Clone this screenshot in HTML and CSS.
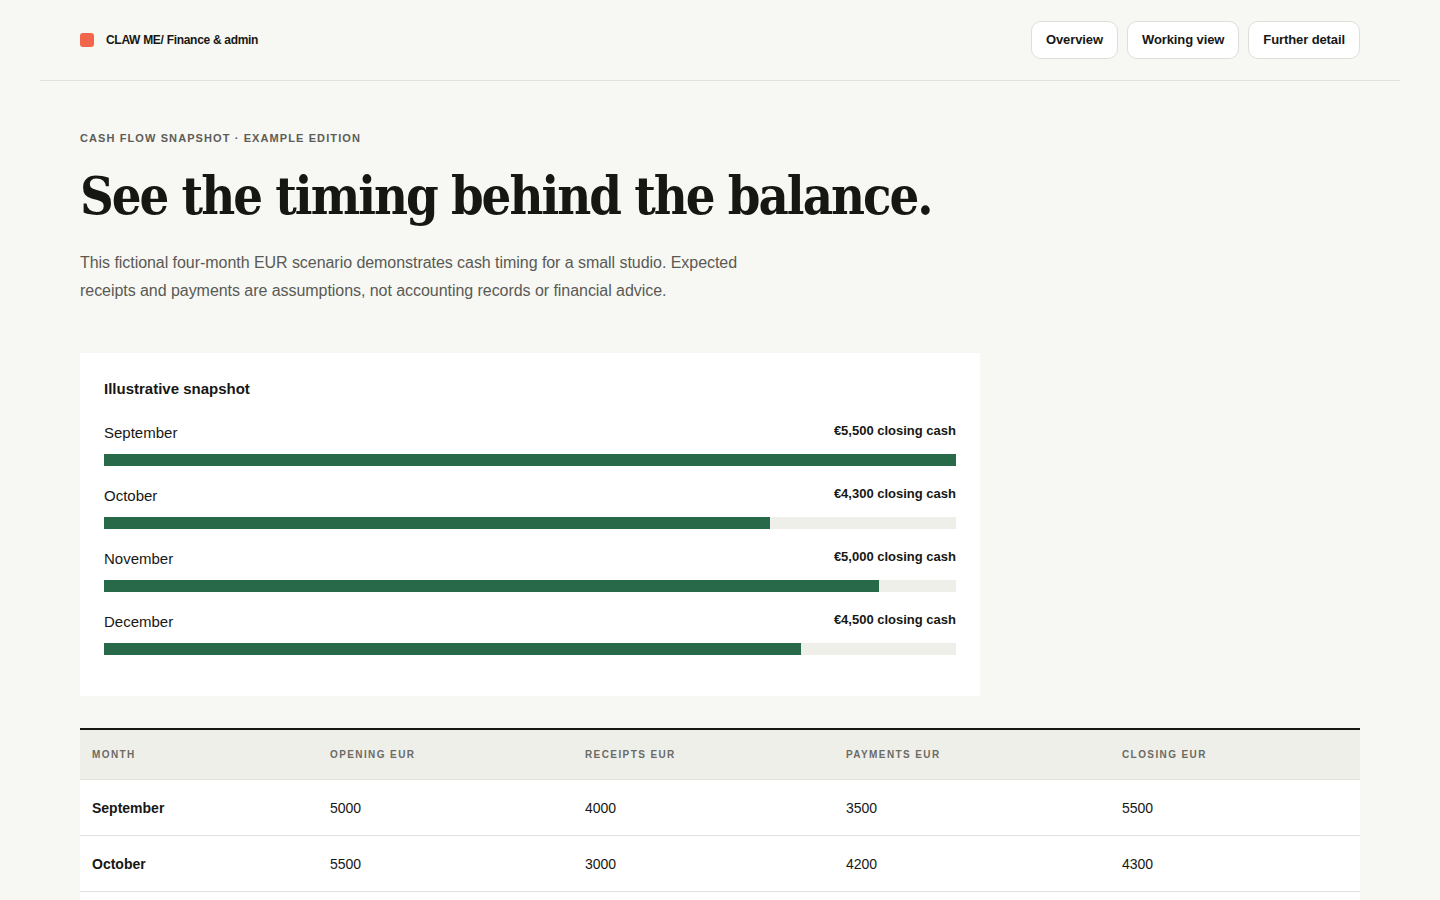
FILE: index.html
```html
<!doctype html>
<html>
<head>
<meta charset="utf-8">
<title>Cash flow snapshot</title>
<link rel="stylesheet" href="styles.css">
</head>
<body>
<div class="page">
	<header class="topbar">
		<div class="brand"><span class="brand-mark"></span>CLAW ME/ Finance &amp; admin</div>
		<nav class="nav">
			<a href="#" class="nav-btn">Overview</a>
			<a href="#" class="nav-btn">Working view</a>
			<a href="#" class="nav-btn">Further detail</a>
		</nav>
	</header>

	<main class="content">
		<p class="eyebrow">Cash flow snapshot · Example edition</p>
		<h1 class="title">See the timing behind the balance.</h1>
		<p class="lead">This fictional four-month EUR scenario demonstrates cash timing for a small studio. Expected receipts and payments are assumptions, not accounting records or financial advice.</p>

		<section class="card">
			<h2 class="card-title">Illustrative snapshot</h2>
			<div class="bars">
				<div class="bar-row">
					<div class="bar-head"><span class="bar-label">September</span><span class="bar-value">€5,500 closing cash</span></div>
					<div class="track"><div class="fill" style="width:100%"></div></div>
				</div>
				<div class="bar-row">
					<div class="bar-head"><span class="bar-label">October</span><span class="bar-value">€4,300 closing cash</span></div>
					<div class="track"><div class="fill" style="width:78.18%"></div></div>
				</div>
				<div class="bar-row">
					<div class="bar-head"><span class="bar-label">November</span><span class="bar-value">€5,000 closing cash</span></div>
					<div class="track"><div class="fill" style="width:90.91%"></div></div>
				</div>
				<div class="bar-row">
					<div class="bar-head"><span class="bar-label">December</span><span class="bar-value">€4,500 closing cash</span></div>
					<div class="track"><div class="fill" style="width:81.82%"></div></div>
				</div>
			</div>
		</section>

		<table class="ledger">
			<thead>
				<tr><th class="c1">Month</th><th class="c2">Opening EUR</th><th class="c3">Receipts EUR</th><th class="c4">Payments EUR</th><th>Closing EUR</th></tr>
			</thead>
			<tbody>
				<tr><td class="month">September</td><td>5000</td><td>4000</td><td>3500</td><td>5500</td></tr>
				<tr><td class="month">October</td><td>5500</td><td>3000</td><td>4200</td><td>4300</td></tr>
				<tr><td class="month">November</td><td>4300</td><td>4500</td><td>3800</td><td>5000</td></tr>
				<tr><td class="month">December</td><td>5000</td><td>3200</td><td>3700</td><td>4500</td></tr>
			</tbody>
		</table>
	</main>
</div>
</body>
</html>
```

FILE: styles.css
```css
body{
	margin:0;
	background:#f7f7f3;
	color:#171714;
	font-family:"Liberation Sans", Arial, sans-serif;
}
.page{
	width:1360px;
	margin:0 auto;
}
.topbar{
	height:80px;
	padding:0 40px;
	display:flex;
	align-items:center;
	justify-content:space-between;
	border-bottom:1px solid #e2e1dc;
}
.brand{
	display:flex;
	align-items:center;
	gap:12px;
	font-size:12px;
	font-weight:700;
	letter-spacing:-0.3px;
}
.brand-mark{
	width:14px;
	height:14px;
	border-radius:3px;
	background:#f2674b;
}
.nav{
	display:flex;
	gap:9px;
}
.nav-btn{
	display:inline-block;
	height:38px;
	line-height:36px;
	box-sizing:border-box;
	padding:0 14px;
	border:1px solid #dfded8;
	border-radius:10px;
	background:#fff;
	color:#171714;
	font-size:13px;
	font-weight:700;
	text-decoration:none;
	letter-spacing:-0.1px;
}
.content{
	padding:0 40px;
}
.eyebrow{
	margin:51px 0 0;
	font-size:11px;
	font-weight:700;
	letter-spacing:1.1px;
	text-transform:uppercase;
	color:#5d5d58;
}
.title{
	margin:18px 0 0;
	font-family:"DejaVu Serif", "Liberation Serif", serif;
	font-stretch:condensed;
	font-size:52px;
	line-height:68px;
	font-weight:700;
	letter-spacing:-2px;
	color:#161613;
}
.lead{
	margin:19px 0 0;
	max-width:680px;
	font-size:16px;
	line-height:28px;
	color:#5a5a55;
	letter-spacing:-0.05px;
}
.card{
	margin-top:48px;
	width:900px;
	box-sizing:border-box;
	padding:26px 24px 41px;
	background:#fff;
}
.card-title{
	margin:0;
	font-size:15px;
	line-height:20px;
	font-weight:700;
}
.bars{
	margin-top:23px;
	display:flex;
	flex-direction:column;
	gap:19px;
}
.bar-head{
	display:flex;
	justify-content:space-between;
	align-items:flex-start;
	height:32px;
}
.bar-label{
	font-size:15px;
	line-height:20px;
	padding-top:1px;
}
.bar-value{
	font-size:13px;
	font-weight:700;
	line-height:18px;
}
.track{
	height:12px;
	background:#efefea;
}
.fill{
	height:100%;
	background:#28694a;
}
.ledger{
	margin-top:32px;
	width:100%;
	border-collapse:collapse;
	border-top:2px solid #171714;
	font-size:14px;
}
.ledger th{
	height:49px;
	padding:0 12px;
	background:#efefea;
	text-align:left;
	font-size:10px;
	font-weight:700;
	letter-spacing:1.4px;
	text-transform:uppercase;
	color:#6b6b66;
	border-bottom:1px solid #e2e1dc;
}
.ledger td{
	height:55px;
	padding:0 12px;
	background:#fff;
	border-bottom:1px solid #e2e1dc;
}
.ledger .c1{ width:214px; }
.ledger .c2{ width:231px; }
.ledger .c3{ width:237px; }
.ledger .c4{ width:252px; }
.ledger .month{
	font-weight:700;
}
```
